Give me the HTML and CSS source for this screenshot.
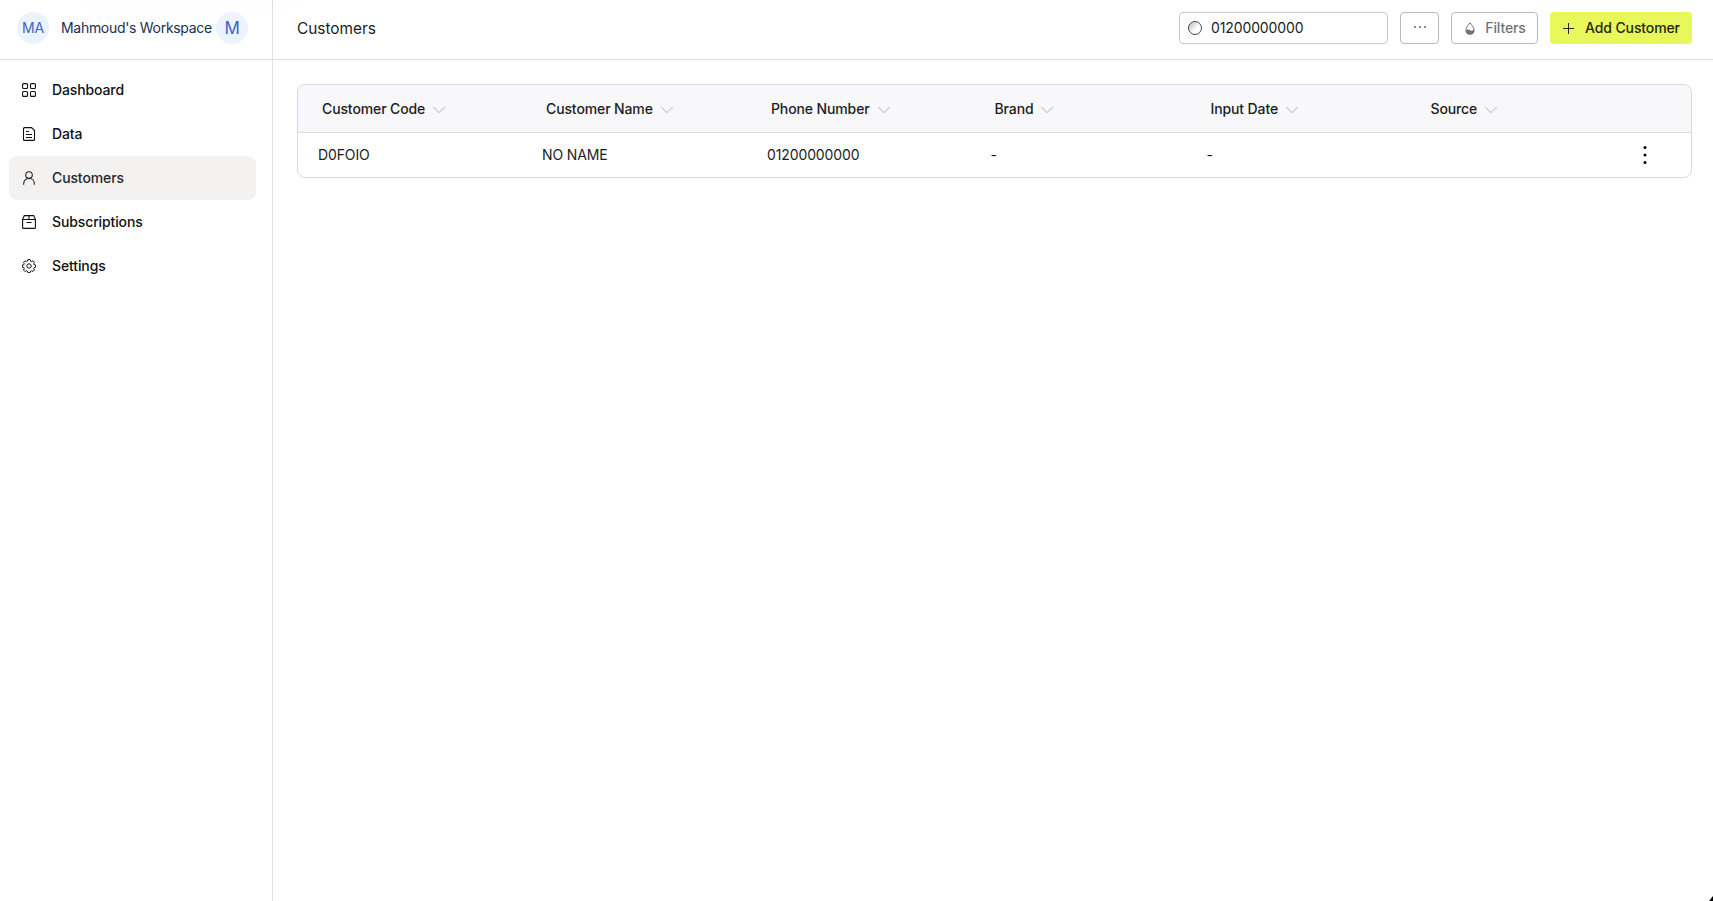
FILE: index.html
```html
<!DOCTYPE html>
<html lang="en">
<head>
<meta charset="utf-8">
<title>Customers</title>
<link rel="stylesheet" href="styles.css">
</head>
<body>
<svg class="defs" width="0" height="0"><symbol id="chevron" viewBox="0 0 14 8"><path d="M1.200 1 7 6.700 12.800 1" fill="none" stroke="currentColor" stroke-width="1.300"/></symbol></svg>
<div class="app">
  <aside class="sidebar">
    <div class="workspace">
      <span class="avatar">MA</span>
      <span class="workspace-name">Mahmoud's Workspace</span>
      <span class="avatar avatar-user">M</span>
    </div>
    <nav class="nav">
      <a class="nav-item"><svg viewBox="0 0 14 14"><rect x=".6" y=".6" width="4.900" height="4.900" rx="1"/><rect x="8.500" y=".6" width="4.900" height="4.900" rx="1"/><rect x=".6" y="8.500" width="4.900" height="4.900" rx="1"/><rect x="8.500" y="8.500" width="4.900" height="4.900" rx="1"/></svg>Dashboard</a>
      <a class="nav-item"><svg viewBox="0 0 14 14"><path d="M2.500.6h7l3 3v8.800a1 1 0 0 1-1 1h-9a1 1 0 0 1-1-1V1.600a1 1 0 0 1 1-1ZM4 4.500h3M4 7.500h6M4 10.500h6"/></svg>Data</a>
      <a class="nav-item active"><svg viewBox="0 0 14 14"><circle cx="7" cy="4.100" r="3.300"/><path d="M1.700 13.800v-1.400c0-2.800 2.200-5 5.300-5s5.300 2.200 5.300 5v1.400"/></svg>Customers</a>
      <a class="nav-item"><svg viewBox="0 0 14 14"><path d="M.6 4.500h12.800v7.900a1 1 0 0 1-1 1H1.600a1 1 0 0 1-1-1ZM.6 4.500 2.300.6h9.400l1.700 3.900M7 .6v3.900M4.500 7.500h5"/></svg>Subscriptions</a>
      <a class="nav-item"><svg class="gear" viewBox="0 0 14 14"><circle cx="7" cy="7" r="2.200"/><path d="M5.900.6h2.200l.5 1.600.9.400 1.500-.8 1.500 1.500-.8 1.500.4.900 1.500.3v2.200l-1.500.4-.4.900.8 1.500-1.500 1.500-1.500-.8-.9.400-.5 1.500H5.900l-.5-1.500-.9-.4-1.500.8L1.500 11l.8-1.500-.4-.9L.4 8.200V6l1.500-.3.4-.9-.8-1.500L3 1.800l1.500.8.900-.4Z"/></svg>Settings</a>
    </nav>
  </aside>
  <main class="main">
    <header class="topbar">
      <h1>Customers</h1>
      <div class="search"><span class="spinner"></span>01200000000</div>
      <button class="btn btn-more"><svg width="14" height="4" viewBox="0 0 14 4"><g fill="currentColor"><circle cx="2" cy="2" r="1.100"/><circle cx="7" cy="2" r="1.100"/><circle cx="12" cy="2" r="1.100"/></g></svg></button>
      <button class="btn btn-filter"><svg width="10" height="13" viewBox="0 0 10 13"><path d="M5 .8C3.500 3 .9 5.300.9 8.200a4.100 4.100 0 0 0 8.200 0C9.100 5.300 6.500 3 5 .8Z" fill="none" stroke="currentColor"/><path d="M.9 8.200Q3 7 5 8.200T9.100 7.600v.6a4.100 4.100 0 0 1-8.200 0Z" fill="currentColor"/></svg>Filters</button>
      <button class="btn btn-add"><svg width="11" height="11" viewBox="0 0 11 11"><path d="M5.500 0v11M0 5.500h11" stroke="currentColor"/></svg>Add Customer</button>
    </header>
    <section class="content">
      <div class="table">
        <div class="row head">
          <span>Customer Code<svg><use href="#chevron"/></svg></span>
          <span>Customer Name<svg><use href="#chevron"/></svg></span>
          <span>Phone Number<svg><use href="#chevron"/></svg></span>
          <span>Brand<svg><use href="#chevron"/></svg></span>
          <span>Input Date<svg><use href="#chevron"/></svg></span>
          <span>Source<svg><use href="#chevron"/></svg></span>
        </div>
        <div class="row">
          <span>D0FOIO</span><span>NO NAME</span><span>01200000000</span><span>-</span><span>-</span><span></span>
          <span class="menu"><svg width="4" height="18" viewBox="0 0 4 18"><circle cx="2" cy="1.600" r="1.500"/><circle cx="2" cy="9" r="1.500"/><circle cx="2" cy="16.400" r="1.500"/></svg></span>
        </div>
      </div>
    </section>
  </main>
</div>
<span class="window-shadow"></span>
<span class="corner"></span>
</body>
</html>
```
FILE: styles.css
```css
* { box-sizing: border-box; }
body {
  margin: 0;
  background: #fff;
  color: #1b1d21;
  font: 14px/20px Inter, "Liberation Sans", sans-serif;
  letter-spacing: -.12px;
  overflow: hidden;
}
.defs { position: absolute; }
.app { display: flex; height: 100vh; }

.sidebar { width: 273px; border-right: 1px solid #e3dfe3; }
.workspace {
  display: flex;
  align-items: center;
  height: 60px;
  padding: 0 0 3px 17px;
  border-bottom: 1px solid #e0dee1;
}
.avatar {
  display: flex;
  flex-shrink: 0;
  align-items: center;
  justify-content: center;
  width: 32px;
  height: 32px;
  border-radius: 50%;
  background: #edf2ff;
  color: #3b63c4;
}
.avatar-user { font-size: 17px; }
.workspace-name {
  width: 155px;
  margin-left: 12px;
  color: #1c2f55;
  letter-spacing: -.3px;
  white-space: nowrap;
}
.nav { padding: 8px 16px 0 9px; }
.nav-item {
  display: flex;
  align-items: center;
  gap: 16.500px;
  height: 44px;
  padding-left: 12.500px;
  border-radius: 8px;
  font-weight: 500;
  letter-spacing: -.12px;
  color: #101113;
}
.nav-item svg {
  width: 14px;
  height: 14px;
  fill: none;
  stroke: currentColor;
  stroke-width: 1.1;
}
.nav-item .gear { stroke-width: 1; }
.nav-item.active { background: #f3f2f1; color: #25272b; }

.main { flex: 1; }
.topbar {
  display: flex;
  align-items: center;
  gap: 12px;
  height: 60px;
  padding: 0 21px 3px 24px;
  border-bottom: 1px solid #dedfe2;
}
.topbar h1 {
  flex: 1;
  margin: 0;
  padding-top: 2px;
  font-size: 15.400px;
  font-weight: 400;
  letter-spacing: 0;
}
.search {
  display: flex;
  align-items: center;
  gap: 9px;
  width: 209px;
  height: 32px;
  padding-left: 8px;
  border: 1px solid #c5c8cf;
  border-radius: 4px;
}
.spinner {
  width: 14px;
  height: 14px;
  border: 1px solid #3f4954;
  border-radius: 50%;
  background: linear-gradient(135deg, #b9bcc1, #fff 60%);
}
.btn {
  display: flex;
  align-items: center;
  justify-content: center;
  height: 32px;
  padding: 0;
  border: 1px solid #b3bac5;
  border-radius: 4px;
  background: #fff;
  color: #6c737b;
  font: 500 14px/20px Inter, "Liberation Sans", sans-serif;
  letter-spacing: -.12px;
}
.btn-more { width: 39px; padding-bottom: 2px; }
.btn-filter { width: 87px; gap: 10px; padding-left: 2px; }
.btn-add { width: 142px; gap: 11px; padding-left: 1px; border: 0; background: #e8f75a; color: #23270f; }

.content { padding: 24px 21px 0 24px; }
.table { border: 1px solid #d8d8e0; border-radius: 8px; overflow: hidden; }
.row {
  display: grid;
  grid-template-columns: 224px 225px 223.500px 216px 220px 200px 1fr;
  align-items: center;
  height: 44px;
  padding-left: 20px;
}
.row.head {
  height: 48px;
  padding-left: 24px;
  border-bottom: 1px solid #d8d8e0;
  background: #f8f8fb;
  font-weight: 500;
}
.head span { display: flex; align-items: center; gap: 7px; }
.head svg { width: 14px; height: 8px; margin-top: 2px; color: #cfcfd3; }
.menu { display: flex; padding-left: 16.500px; }

.window-shadow {
  position: absolute;
  top: -18px;
  left: 80px;
  width: 218px;
  height: 18px;
  box-shadow: 0 2px 20px rgba(0, 0, 0, .02);
}
.corner {
  position: absolute;
  right: 0;
  bottom: 0;
  width: 4px;
  height: 5px;
  background: #000;
  clip-path: polygon(100% 0, 100% 100%, 0 100%);
}
```
